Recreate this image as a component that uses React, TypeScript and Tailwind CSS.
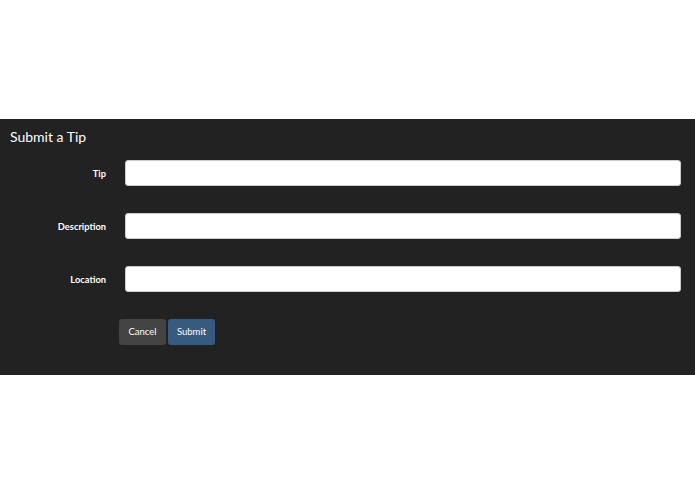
import React from 'react';

const fields = ['Tip', 'Description', 'Location'];

export default function App() {
  return (
    <div className="w-[695px] h-[494px] bg-white" style={{ fontFamily: 'Lato, "Open Sans", sans-serif' }}>
      <div className="h-[119px]" />
      <div className="bg-[#222222] h-[256px] pt-[8px] px-[10px]">
        <h2 className="text-[14px] leading-[19px] text-white">Submit a Tip</h2>
        <div className="mt-[14px] flex flex-col gap-[27px]">
          {fields.map((f) => (
            <div key={f} className="flex items-center">
              <label className="w-[96px] pt-[2px] text-right text-[9.3px] font-bold text-white">{f}</label>
              <input
                type="text"
                className="ml-[19px] h-[26px] w-[556px] rounded-[3px] bg-white border border-[#cccccc] outline-none"
              />
            </div>
          ))}
          <div className="flex gap-[2px] pl-[109px]">
            <button className="h-[26px] w-[47px] rounded-[3px] bg-[#444444] text-[9.5px] text-white">Cancel</button>
            <button className="h-[26px] w-[47px] rounded-[3px] bg-[#375a7f] text-[9.5px] text-white">Submit</button>
          </div>
        </div>
      </div>
    </div>
  );
}
